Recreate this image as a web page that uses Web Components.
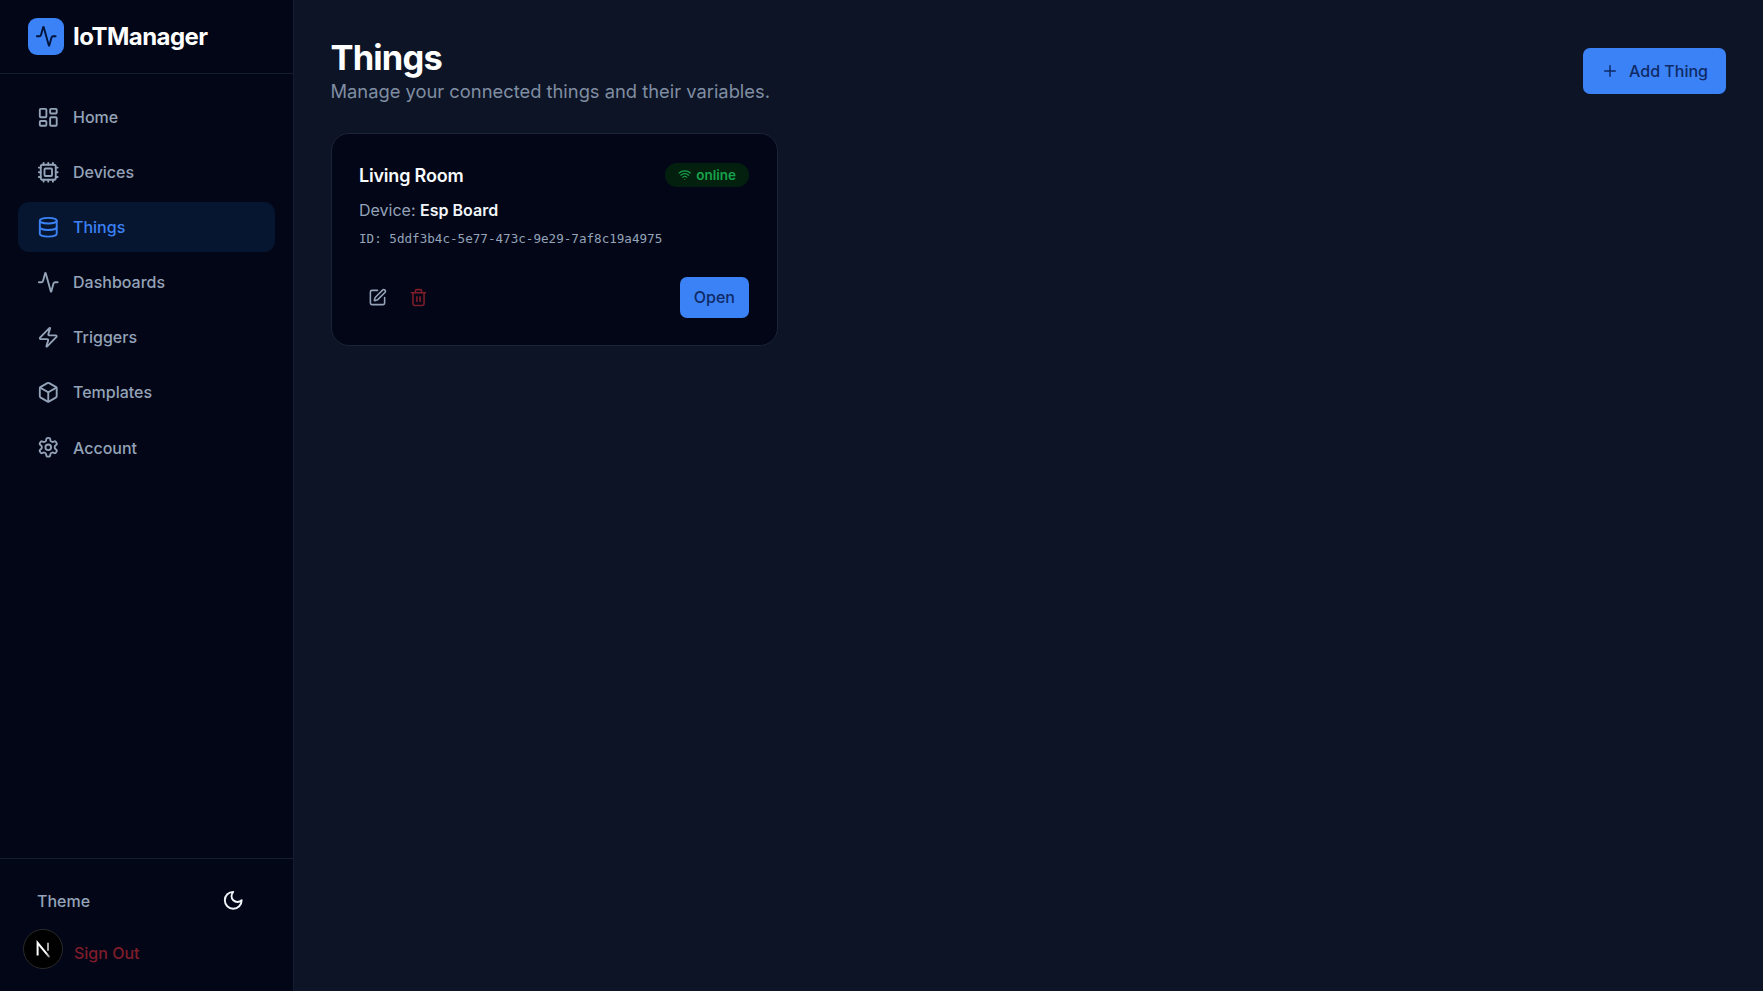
<!DOCTYPE html>
<html lang="en">
<head>
<meta charset="utf-8">
<title>Things</title>
<style>
html,body{margin:0;padding:0;height:100%;background:#0d1426;font-family:Inter,"Liberation Sans",sans-serif;overflow:hidden}
</style>
</head>
<body>
<app-shell>
  <app-sidebar slot="side">
    <nav-item icon="dashboard">Home</nav-item>
    <nav-item icon="cpu">Devices</nav-item>
    <nav-item icon="database" active>Things</nav-item>
    <nav-item icon="activity">Dashboards</nav-item>
    <nav-item icon="zap">Triggers</nav-item>
    <nav-item icon="box">Templates</nav-item>
    <nav-item icon="settings">Account</nav-item>
  </app-sidebar>
  <page-header title="Things" subtitle="Manage your connected things and their variables."></page-header>
  <thing-card name="Living Room" status="online" device="Esp Board" thing-id="5ddf3b4c-5e77-473c-9e29-7af8c19a4975"></thing-card>
</app-shell>
<script>
const ICONS={
dashboard:'<rect width="7" height="9" x="3" y="3" rx="1"/><rect width="7" height="5" x="14" y="3" rx="1"/><rect width="7" height="9" x="14" y="12" rx="1"/><rect width="7" height="5" x="3" y="16" rx="1"/>',
cpu:'<path d="M12 20v2M12 2v2M17 20v2M17 2v2M2 12h2M2 17h2M2 7h2M20 12h2M20 17h2M20 7h2M7 20v2M7 2v2"/><rect x="4" y="4" width="16" height="16" rx="2"/><rect x="8" y="8" width="8" height="8" rx="1"/>',
database:'<ellipse cx="12" cy="5" rx="9" ry="3"/><path d="M3 5V19A9 3 0 0 0 21 19V5"/><path d="M3 12A9 3 0 0 0 21 12"/>',
activity:'<path d="M22 12h-2.48a2 2 0 0 0-1.93 1.46l-2.35 8.36a.25.25 0 0 1-.48 0L9.24 2.18a.25.25 0 0 0-.48 0l-2.35 8.36A2 2 0 0 1 4.49 12H2"/>',
zap:'<path d="M4 14a1 1 0 0 1-.78-1.63l9.9-10.2a.5.5 0 0 1 .86.46l-1.92 6.02A1 1 0 0 0 13 10h7a1 1 0 0 1 .78 1.63l-9.9 10.2a.5.5 0 0 1-.86-.46l1.92-6.02A1 1 0 0 0 11 14z"/>',
box:'<path d="M21 8a2 2 0 0 0-1-1.73l-7-4a2 2 0 0 0-2 0l-7 4A2 2 0 0 0 3 8v8a2 2 0 0 0 1 1.73l7 4a2 2 0 0 0 2 0l7-4A2 2 0 0 0 21 16Z"/><path d="m3.3 7 8.7 5 8.7-5"/><path d="M12 22V12"/>',
settings:'<path d="M12.22 2h-.44a2 2 0 0 0-2 2v.18a2 2 0 0 1-1 1.73l-.43.25a2 2 0 0 1-2 0l-.15-.08a2 2 0 0 0-2.73.73l-.22.38a2 2 0 0 0 .73 2.73l.15.1a2 2 0 0 1 1 1.72v.51a2 2 0 0 1-1 1.74l-.15.09a2 2 0 0 0-.73 2.73l.22.38a2 2 0 0 0 2.73.73l.15-.08a2 2 0 0 1 2 0l.43.25a2 2 0 0 1 1 1.73V20a2 2 0 0 0 2 2h.44a2 2 0 0 0 2-2v-.18a2 2 0 0 1 1-1.73l.43-.25a2 2 0 0 1 2 0l.15.08a2 2 0 0 0 2.73-.73l.22-.39a2 2 0 0 0-.73-2.73l-.15-.08a2 2 0 0 1-1-1.74v-.5a2 2 0 0 1 1-1.74l.15-.09a2 2 0 0 0 .73-2.73l-.22-.38a2 2 0 0 0-2.73-.73l-.15.08a2 2 0 0 1-2 0l-.43-.25a2 2 0 0 1-1-1.73V4a2 2 0 0 0-2-2z"/><circle cx="12" cy="12" r="3"/>',
moon:'<path d="M12 3a6 6 0 0 0 9 9 9 9 0 1 1-9-9Z"/>',
pen:'<path d="M12 3H5a2 2 0 0 0-2 2v14a2 2 0 0 0 2 2h14a2 2 0 0 0 2-2v-7"/><path d="M18.375 2.625a1 1 0 0 1 3 3l-9.013 9.014a2 2 0 0 1-.853.505l-2.873.84a.5.5 0 0 1-.62-.62l.84-2.873a2 2 0 0 1 .506-.852z"/>',
trash:'<path d="M3 6h18"/><path d="M19 6v14c0 1-1 2-2 2H7c-1 0-2-1-2-2V6"/><path d="M8 6V4c0-1 1-2 2-2h4c1 0 2 1 2 2v2"/><line x1="10" x2="10" y1="11" y2="17"/><line x1="14" x2="14" y1="11" y2="17"/>',
wifi:'<path d="M12 20h.01"/><path d="M2 8.82a15 15 0 0 1 20 0"/><path d="M5 12.859a10 10 0 0 1 14 0"/><path d="M8.5 16.429a5 5 0 0 1 7 0"/>',
plus:'<path d="M5 12h14"/><path d="M12 5v14"/>'
};
class Base extends HTMLElement{
  render(html){ if(!this.shadowRoot) this.attachShadow({mode:'open'}); this.shadowRoot.innerHTML=html; }
}
class AppIcon extends Base{
  connectedCallback(){
    const s=this.getAttribute('size')||'22.5', w=this.getAttribute('stroke')||'2';
    this.render(`<style>:host{display:inline-flex;flex:none;width:${s}px;height:${s}px}svg{display:block;width:100%;height:100%}</style>
    <svg viewBox="0 0 24 24" fill="none" stroke="currentColor" stroke-width="${w}" stroke-linecap="round" stroke-linejoin="round">${ICONS[this.getAttribute('name')]||''}</svg>`);
  }
}
class AppShell extends Base{
  connectedCallback(){
    this.render(`<style>
    :host{display:flex;height:991px;width:100%;background:#0d1426}
    main{flex:1;min-width:0;padding:36px 37px 36px 36.5px;box-sizing:border-box}
    </style><slot name="side"></slot><main><slot></slot></main>`);
  }
}
class AppSidebar extends Base{
  connectedCallback(){
    this.render(`<style>
    :host{display:flex;flex-direction:column;flex:none;width:294px;height:991px;box-sizing:border-box;background:#020617;border-right:1px solid #151d30}
    header{height:74px;box-sizing:border-box;border-bottom:1px solid #151d30;display:flex;align-items:center;gap:9px;padding:0 27px 0 27.5px}
    .logo{width:36.5px;height:36.5px;border-radius:9px;background:#3b82f6;color:#02133a;display:flex;align-items:center;justify-content:center}
    .brand{font-size:24px;font-weight:700;color:#fff;letter-spacing:-.55px;white-space:nowrap;line-height:1}
    nav{flex:1;display:flex;flex-direction:column;gap:5.65px;padding:18px 18px 0}
    footer{height:133px;box-sizing:border-box;border-top:1px solid #151d30;padding:19px 0 0}
    .theme{display:flex;align-items:center;justify-content:space-between;padding:0 48.5px 0 37px;height:45px;box-sizing:border-box;font-size:16px;font-weight:500;color:#94a3b8}
    .theme app-icon{color:#f1f5f9}
    .user{display:flex;align-items:flex-start;padding:0 0 0 23px;gap:11px;margin-top:5.5px}
    .avatar{width:40px;height:40px;border-radius:50%;background:#000;border:1px solid #2a2a2a;box-sizing:border-box;display:flex;align-items:center;justify-content:center;flex:none}
    .out{font-size:16px;font-weight:500;color:#7f1d2a;margin-top:13px;line-height:22.5px}
    </style>
    <header><div class="logo"><app-icon name="activity" size="22.5"></app-icon></div><div class="brand">IoTManager</div></header>
    <nav><slot></slot></nav>
    <footer>
      <div class="theme"><span>Theme</span><app-icon name="moon" size="22.5"></app-icon></div>
      <div class="user"><div class="avatar"><svg width="20" height="20" viewBox="0 0 20 20" aria-hidden="true"><defs><linearGradient id="ng" x1="0" y1="0" x2="1" y2="1"><stop offset="0" stop-color="#fff"/><stop offset=".7" stop-color="#fff"/><stop offset="1" stop-color="#777"/></linearGradient></defs><path d="M4.6 16.5V3.8L16.4 18.2" fill="none" stroke="url(#ng)" stroke-width="2"/><path d="M15 3.8v8" fill="none" stroke="#bbb" stroke-width="1.8"/></svg></div><div class="out">Sign Out</div></div>
    </footer>`);
  }
}
class NavItem extends Base{
  connectedCallback(){
    const a=this.hasAttribute('active');
    this.render(`<style>
    :host{display:flex;align-items:center;gap:14px;height:49.5px;padding:0 18.5px;border-radius:11px;box-sizing:border-box;font-size:16px;font-weight:500;color:${a?'#3b82f6':'#94a3b8'};background:${a?'#061630':'transparent'}}
    </style><app-icon name="${this.getAttribute('icon')}" stroke="2"></app-icon><span><slot></slot></span>`);
  }
}
class PageHeader extends Base{
  connectedCallback(){
    this.render(`<style>
    :host{display:flex;justify-content:space-between;align-items:center;height:70.5px;margin:0 0 26.5px}
    h1{margin:0;font-size:34.5px;line-height:39px;font-weight:700;color:#fff;letter-spacing:-.85px}
    p{margin:0;font-size:18.33px;line-height:28px;color:#94a3b8}
    .sub{opacity:.85}
    </style>
    <div><h1>${this.getAttribute('title')}</h1><p class="sub">${this.getAttribute('subtitle')}</p></div>
    <app-button icon="plus" wide>Add Thing</app-button>`);
  }
}
class AppButton extends Base{
  connectedCallback(){
    const w=this.hasAttribute('wide');
    this.render(`<style>
    :host{display:inline-flex;align-items:center;justify-content:center;gap:${w?'10px':'0'};box-sizing:border-box;background:#3b82f6;color:#0f2a66;font-size:16px;font-weight:500;border-radius:7px;height:${w?'46px':'41px'};padding:0 ${w?'18px':'14px'};white-space:nowrap}
    </style>${this.getAttribute('icon')?`<app-icon name="${this.getAttribute('icon')}" size="18"></app-icon>`:''}<span><slot></slot></span>`);
  }
}
class StatusBadge extends Base{
  connectedCallback(){
    this.render(`<style>
    :host{display:inline-flex;align-items:center;gap:4.5px;height:24px;padding:0 13px 0 13.5px;box-sizing:border-box;border-radius:12px;background:#03200f;color:#16a34a;font-size:13.5px;font-weight:600}
    </style><app-icon name="wifi" size="13.5"></app-icon><span><slot></slot></span>`);
  }
}
class ThingCard extends Base{
  connectedCallback(){
    const g=n=>this.getAttribute(n);
    this.render(`<style>
    :host{display:block;width:447px;height:213px;box-sizing:border-box;background:#020617;border:1px solid #1b2436;border-radius:18px;padding:29px 27.5px 27px}
    .top{display:flex;justify-content:space-between;align-items:center;height:24px}
    .name{font-size:18px;font-weight:600;color:#f8fafc;letter-spacing:-.2px}
    .dev{margin-top:11px;font-size:16px;line-height:24px;color:#94a3b8}
    .dev b{font-weight:600;color:#f1f5f9}
    .id{margin-top:8px;font-family:"DejaVu Sans Mono",monospace;font-size:12.6px;line-height:18px;color:#94a3b8}
    .foot{display:flex;justify-content:space-between;align-items:center;margin-top:28.5px}
    .acts{display:flex;gap:22px;padding-left:9px;align-items:center}
    .pen{color:#94a3b8}.trash{color:#7f1d2a}
    </style>
    <div class="top"><div class="name">${g('name')}</div><status-badge>${g('status')}</status-badge></div>
    <div class="dev">Device: <b>${g('device')}</b></div>
    <div class="id">ID: ${g('thing-id')}</div>
    <div class="foot"><div class="acts"><app-icon class="pen" name="pen" size="19"></app-icon><app-icon class="trash" name="trash" size="19"></app-icon></div><app-button>Open</app-button></div>`);
  }
}
[['app-icon',AppIcon],['app-shell',AppShell],['app-sidebar',AppSidebar],['nav-item',NavItem],['page-header',PageHeader],['app-button',AppButton],['status-badge',StatusBadge],['thing-card',ThingCard]].forEach(([n,c])=>customElements.define(n,c));
</script>
</body>
</html>
